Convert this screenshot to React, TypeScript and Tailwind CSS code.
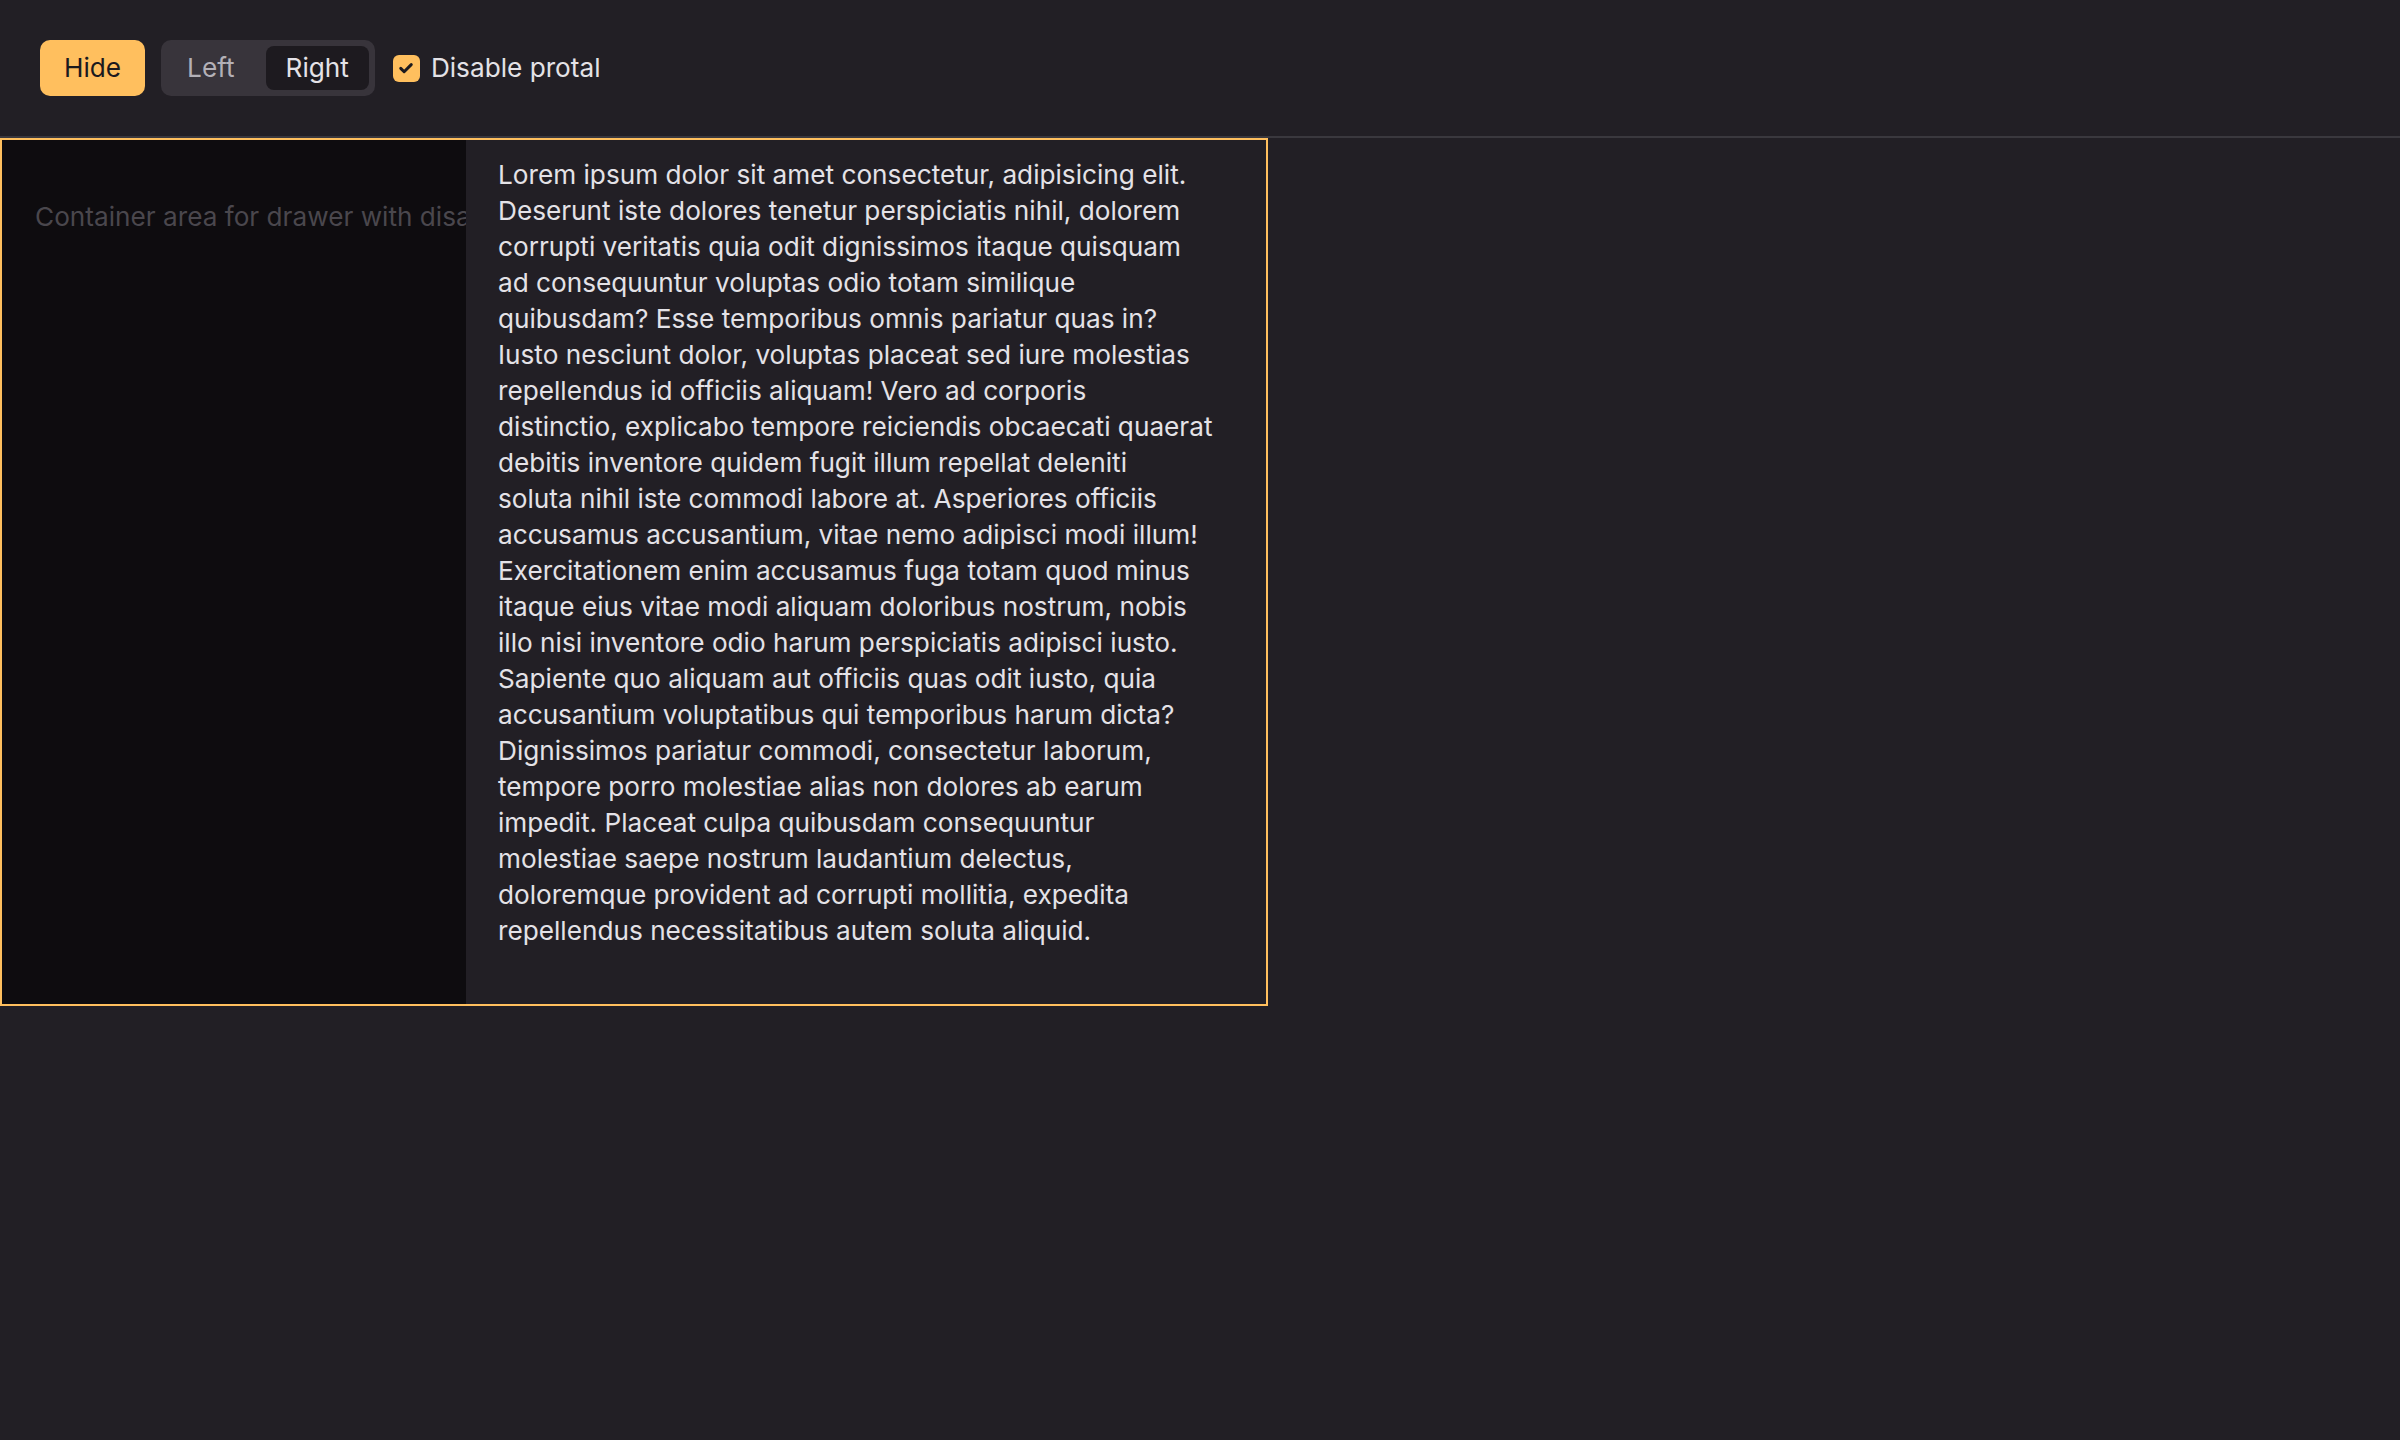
import { useState } from 'react';

// line breaks kept as in the design so the paragraph wraps the same way
const LOREM_LINES = [
  'Lorem ipsum dolor sit amet consectetur, adipisicing elit.',
  'Deserunt iste dolores tenetur perspiciatis nihil, dolorem',
  'corrupti veritatis quia odit dignissimos itaque quisquam',
  'ad consequuntur voluptas odio totam similique',
  'quibusdam? Esse temporibus omnis pariatur quas in?',
  'Iusto nesciunt dolor, voluptas placeat sed iure molestias',
  'repellendus id officiis aliquam! Vero ad corporis',
  'distinctio, explicabo tempore reiciendis obcaecati quaerat',
  'debitis inventore quidem fugit illum repellat deleniti',
  'soluta nihil iste commodi labore at. Asperiores officiis',
  'accusamus accusantium, vitae nemo adipisci modi illum!',
  'Exercitationem enim accusamus fuga totam quod minus',
  'itaque eius vitae modi aliquam doloribus nostrum, nobis',
  'illo nisi inventore odio harum perspiciatis adipisci iusto.',
  'Sapiente quo aliquam aut officiis quas odit iusto, quia',
  'accusantium voluptatibus qui temporibus harum dicta?',
  'Dignissimos pariatur commodi, consectetur laborum,',
  'tempore porro molestiae alias non dolores ab earum',
  'impedit. Placeat culpa quibusdam consequuntur',
  'molestiae saepe nostrum laudantium delectus,',
  'doloremque provident ad corrupti mollitia, expedita',
  'repellendus necessitatibus autem soluta aliquid.',
];

export default function App() {
  const [side, setSide] = useState<'left' | 'right'>('right');
  const [disablePortal, setDisablePortal] = useState(true);

  return (
    <div className="min-h-screen w-full bg-[#221f25] font-['Inter',sans-serif] text-[26.2px] leading-[36px] text-[#e4e2e7]">
      {/* toolbar */}
      <div className="flex items-center gap-4 border-b-2 border-[#3a383e] px-10 py-10">
        <button className="h-14 rounded-[10px] bg-[#ffbf5e] px-6 text-[#1c1a1e]">Hide</button>
        <div className="flex h-14 items-center gap-[11px] rounded-[10px] bg-[#38343b] p-1.5">
          <button
            onClick={() => setSide('left')}
            className={`h-11 rounded-lg px-5 ${side === 'left' ? 'bg-[#1d1a1f] text-[#e4e2e7]' : 'text-[#b3b0b7]'}`}
          >
            Left
          </button>
          <button
            onClick={() => setSide('right')}
            className={`h-11 rounded-lg px-5 ${side === 'right' ? 'bg-[#1d1a1f] text-[#e4e2e7]' : 'text-[#b3b0b7]'}`}
          >
            Right
          </button>
        </div>
        <label className="ml-[2px] flex cursor-pointer items-center gap-[11px]">
          <span
            onClick={() => setDisablePortal(!disablePortal)}
            className="flex h-[27px] w-[27px] items-center justify-center rounded-md bg-[#ffbf5e]"
          >
            {disablePortal && (
              <svg className="h-[18px] w-[18px] text-[#1c1a1e]" fill="none" stroke="currentColor" viewBox="0 0 24 24">
                <path strokeLinecap="round" strokeLinejoin="round" strokeWidth="4" d="M5 12.5l4.5 4.5L19 7.5" />
              </svg>
            )}
          </span>
          <span className="text-[#e4e2e7]">Disable protal</span>
        </label>
      </div>

      {/* container */}
      <div className="relative flex h-[868px] w-[1268px] overflow-hidden border-2 border-[#ffbf5e]">
        <div className="flex-1 overflow-hidden bg-[#0e0c0f]">
          <p className="mt-[59px] whitespace-nowrap pl-[33px] text-[#4a474d]">
            Container area for drawer with disabled portal
          </p>
        </div>
        <div className="w-[800px] shrink-0 bg-[#221f25] pl-8 pr-6 pt-[17px]">
          <p className="whitespace-nowrap text-[#e4e2e7]">
            {LOREM_LINES.map((line, i) => (
              <span key={i} className="block">
                {line}
              </span>
            ))}
          </p>
        </div>
      </div>
    </div>
  );
}
